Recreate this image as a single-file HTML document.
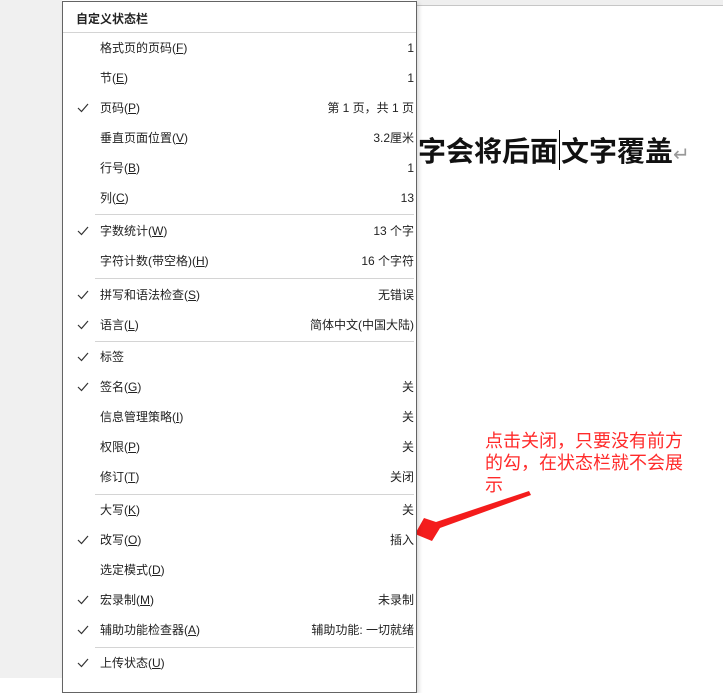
<!DOCTYPE html>
<html><head><meta charset="utf-8"><style>
body{margin:0;width:723px;height:678px;position:relative;overflow:hidden;background:#fff;font-family:"Liberation Sans","Microsoft YaHei","Noto Sans CJK SC",sans-serif;}
.bgl{position:absolute;left:0;top:0;width:62px;height:678px;background:#f0f0f0}
.bgt{position:absolute;left:416px;top:0;width:307px;height:5px;background:#efefef;border-bottom:1px solid #c6c6c6}
.menu{position:absolute;left:62px;top:1px;width:353px;height:690px;background:#fff;border:1px solid #646464;box-shadow:2px 2px 4px rgba(0,0,0,.15)}
.r{position:absolute;left:0;width:353px;height:30px;font-size:12px;color:#222;line-height:30px}
.r .l{position:absolute;left:37px}
.r .v{position:absolute;right:2px}
.r .c{position:absolute;left:14px;top:10px;width:12px;height:10px}
.s{position:absolute;left:32px;width:319px;height:1px;background:#d4d4d4}
u{text-decoration:underline}
.doc{position:absolute;left:418px;top:130px;font-size:28px;font-weight:bold;color:#111;font-family:"Noto Sans CJK SC",sans-serif;line-height:40px;white-space:nowrap}
.note{position:absolute;left:485px;top:429px;width:214px;font-size:18px;line-height:22px;color:#ff2a2a;font-family:"Noto Sans CJK SC",sans-serif}
</style></head><body>
<div class="bgl"></div><div class="bgt"></div>
<div class="doc">字会将后面<span style="border-left:1px solid #000;margin-left:1px;margin-right:1px"></span>文字覆盖<span style="color:#999;font-weight:normal;font-size:20px">↵</span></div>
<div class="note">点击关闭，只要没有前方的勾，在状态栏就不会展示</div>
<svg style="position:absolute;left:0;top:0" width="723" height="678"><polygon points="529,491 531,495 440,528 432,541 415,534 424,518 436,522" fill="#f41c1c"/></svg>
<div class="menu">
<div class="r" style="top:2px;font-weight:bold"><span style="position:absolute;left:13px">自定义状态栏</span></div>
<div class="s" style="top:30px;left:0;width:353px"></div>
<div class="r" style="top:31px"><span class="l">格式页的页码(<u>F</u>)</span><span class="v">1</span></div>
<div class="r" style="top:61px"><span class="l">节(<u>E</u>)</span><span class="v">1</span></div>
<div class="r" style="top:91px"><svg class="c"><path d="M1 5 L4.5 8.5 L11 1" stroke="#333" fill="none" stroke-width="1.2"/></svg><span class="l">页码(<u>P</u>)</span><span class="v">第 1 页，共 1 页</span></div>
<div class="r" style="top:121px"><span class="l">垂直页面位置(<u>V</u>)</span><span class="v">3.2厘米</span></div>
<div class="r" style="top:151px"><span class="l">行号(<u>B</u>)</span><span class="v">1</span></div>
<div class="r" style="top:181px"><span class="l">列(<u>C</u>)</span><span class="v">13</span></div>
<div class="s" style="top:212px"></div>
<div class="r" style="top:214px"><svg class="c"><path d="M1 5 L4.5 8.5 L11 1" stroke="#333" fill="none" stroke-width="1.2"/></svg><span class="l">字数统计(<u>W</u>)</span><span class="v">13 个字</span></div>
<div class="r" style="top:244px"><span class="l">字符计数(带空格)(<u>H</u>)</span><span class="v">16 个字符</span></div>
<div class="s" style="top:276px"></div>
<div class="r" style="top:278px"><svg class="c"><path d="M1 5 L4.5 8.5 L11 1" stroke="#333" fill="none" stroke-width="1.2"/></svg><span class="l">拼写和语法检查(<u>S</u>)</span><span class="v">无错误</span></div>
<div class="r" style="top:308px"><svg class="c"><path d="M1 5 L4.5 8.5 L11 1" stroke="#333" fill="none" stroke-width="1.2"/></svg><span class="l">语言(<u>L</u>)</span><span class="v">简体中文(中国大陆)</span></div>
<div class="s" style="top:339px"></div>
<div class="r" style="top:340px"><svg class="c"><path d="M1 5 L4.5 8.5 L11 1" stroke="#333" fill="none" stroke-width="1.2"/></svg><span class="l">标签</span></div>
<div class="r" style="top:370px"><svg class="c"><path d="M1 5 L4.5 8.5 L11 1" stroke="#333" fill="none" stroke-width="1.2"/></svg><span class="l">签名(<u>G</u>)</span><span class="v">关</span></div>
<div class="r" style="top:400px"><span class="l">信息管理策略(<u>I</u>)</span><span class="v">关</span></div>
<div class="r" style="top:430px"><span class="l">权限(<u>P</u>)</span><span class="v">关</span></div>
<div class="r" style="top:460px"><span class="l">修订(<u>T</u>)</span><span class="v">关闭</span></div>
<div class="s" style="top:492px"></div>
<div class="r" style="top:493px"><span class="l">大写(<u>K</u>)</span><span class="v">关</span></div>
<div class="r" style="top:523px"><svg class="c"><path d="M1 5 L4.5 8.5 L11 1" stroke="#333" fill="none" stroke-width="1.2"/></svg><span class="l">改写(<u>O</u>)</span><span class="v">插入</span></div>
<div class="r" style="top:553px"><span class="l">选定模式(<u>D</u>)</span></div>
<div class="r" style="top:583px"><svg class="c"><path d="M1 5 L4.5 8.5 L11 1" stroke="#333" fill="none" stroke-width="1.2"/></svg><span class="l">宏录制(<u>M</u>)</span><span class="v">未录制</span></div>
<div class="r" style="top:613px"><svg class="c"><path d="M1 5 L4.5 8.5 L11 1" stroke="#333" fill="none" stroke-width="1.2"/></svg><span class="l">辅助功能检查器(<u>A</u>)</span><span class="v">辅助功能: 一切就绪</span></div>
<div class="s" style="top:645px"></div>
<div class="r" style="top:646px"><svg class="c"><path d="M1 5 L4.5 8.5 L11 1" stroke="#333" fill="none" stroke-width="1.2"/></svg><span class="l">上传状态(<u>U</u>)</span></div>
</div>
</body></html>
